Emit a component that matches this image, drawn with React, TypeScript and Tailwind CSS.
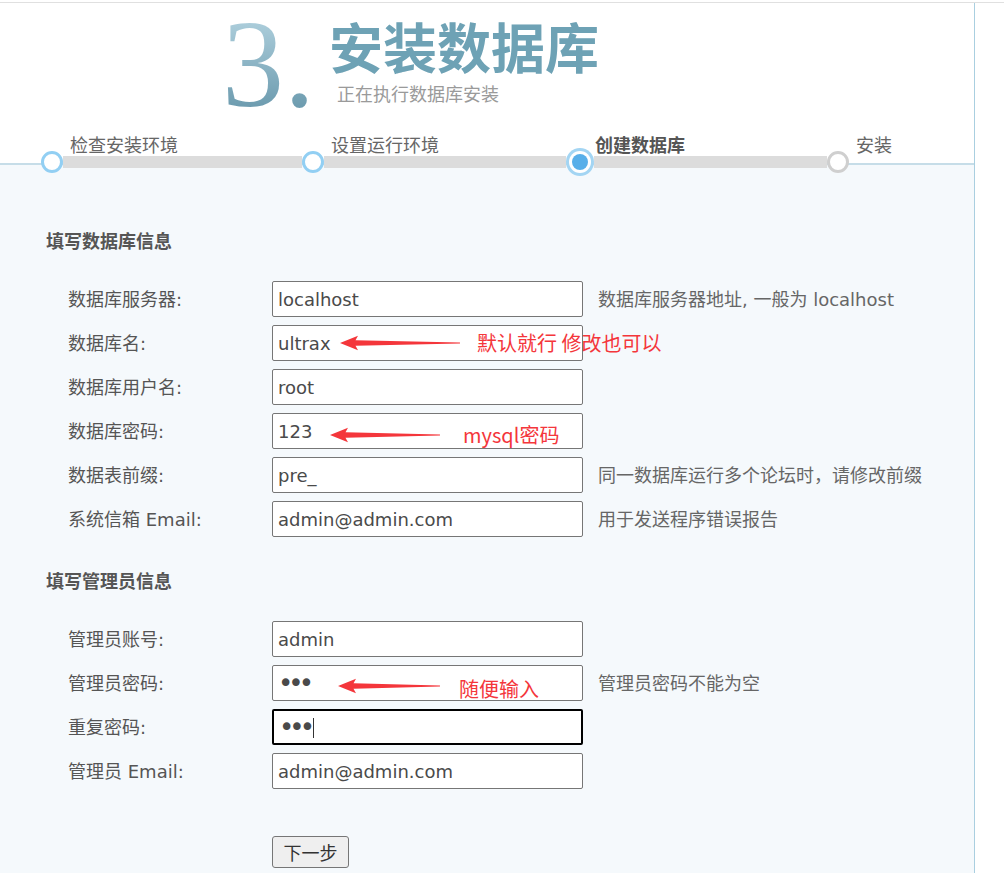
import React from "react";

type StepState = "done" | "active" | "pending";

interface Step {
  label: string;
  state: StepState;
  width: string;
}

const steps: Step[] = [
  { label: "检查安装环境", state: "done", width: "w-[261px]" },
  { label: "设置运行环境", state: "done", width: "w-[264px]" },
  { label: "创建数据库", state: "active", width: "w-[261px]" },
  { label: "安装", state: "pending", width: "w-[60px]" },
];

interface Note {
  arrowLeft: number;
  arrowWidth: number;
  arrowTop: number;
  textLeft: number;
  textTop: number;
  text: string;
}

interface Field {
  label: string;
  value: string;
  password?: boolean;
  focused?: boolean;
  help?: string;
  note?: Note;
}

const dbFields: Field[] = [
  { label: "数据库服务器:", value: "localhost", help: "数据库服务器地址, 一般为 localhost" },
  {
    label: "数据库名:",
    value: "ultrax",
    note: { arrowLeft: 294, arrowWidth: 120, arrowTop: 10, textLeft: 431, textTop: 6, text: "默认就行 修改也可以" },
  },
  { label: "数据库用户名:", value: "root" },
  {
    label: "数据库密码:",
    value: "123",
    note: { arrowLeft: 284, arrowWidth: 110, arrowTop: 14, textLeft: 417, textTop: 10, text: "mysql密码" },
  },
  { label: "数据表前缀:", value: "pre_", help: "同一数据库运行多个论坛时，请修改前缀" },
  { label: "系统信箱 Email:", value: "admin@admin.com", help: "用于发送程序错误报告" },
];

const adminFields: Field[] = [
  { label: "管理员账号:", value: "admin" },
  {
    label: "管理员密码:",
    value: "123",
    password: true,
    help: "管理员密码不能为空",
    note: { arrowLeft: 292, arrowWidth: 102, arrowTop: 13, textLeft: 413, textTop: 12, text: "随便输入" },
  },
  { label: "重复密码:", value: "123", password: true, focused: true },
  { label: "管理员 Email:", value: "admin@admin.com" },
];

const Arrow = ({ width }: { width: number }) => (
  <svg width={width} height={16} viewBox={`0 0 ${width} 16`}>
    <polygon
      points={`0,8 18,0.8 15.5,5.2 ${width},7.4 ${width},8.6 15.5,10.8 18,15.2`}
      fill="#f4363b"
    />
  </svg>
);

const StepCircle = ({ state }: { state: StepState }) => {
  if (state === "active") {
    return (
      <div className="w-[28px] h-[28px] shrink-0 rounded-full bg-[#a3d5f3] p-[3px]">
        <div className="w-full h-full rounded-full bg-white p-[3px]">
          <div className="w-full h-full rounded-full bg-[#58afe9]" />
        </div>
      </div>
    );
  }
  return (
    <div
      className={`w-[22px] h-[22px] shrink-0 rounded-full bg-white border-[3px] ${
        state === "done" ? "border-[#92cff3]" : "border-[#cfcfcf]"
      }`}
    />
  );
};

const FormRow = ({ field }: { field: Field }) => (
  <div className="relative flex items-center h-[36px] pl-[22px]">
    <div className="w-[204px] shrink-0 text-[18px] text-[#555] whitespace-nowrap">{field.label}</div>
    <div
      className={`relative w-[311px] h-[36px] shrink-0 bg-white rounded-[2px] flex items-center px-[5px] ${
        field.focused ? "border-2 border-black" : "border border-[#767676]"
      }`}
    >
      <input
        readOnly
        type={field.password ? "password" : "text"}
        defaultValue={field.value}
        className={`w-full bg-transparent outline-none text-[#4a4a4a] p-0 ${
          field.password ? "text-[26px] tracking-[-5px] leading-[30px]" : "text-[18px]"
        }`}
      />
      {field.focused && <span className="absolute left-[39px] top-[7px] w-px h-[20px] bg-[#333]" />}
    </div>
    {field.help && <div className="ml-[15px] text-[18px] text-[#666] whitespace-nowrap">{field.help}</div>}
    {field.note && (
      <>
        <div className="absolute" style={{ left: field.note.arrowLeft, top: field.note.arrowTop }}>
          <Arrow width={field.note.arrowWidth} />
        </div>
        <div
          className="absolute text-[20px] leading-[24px] text-[#f4363b] whitespace-nowrap font-['Noto_Sans_CJK_SC',sans-serif]"
          style={{ left: field.note.textLeft, top: field.note.textTop }}
        >
          {field.note.text}
        </div>
      </>
    )}
  </div>
);

export default function App() {
  return (
    <div className="min-h-screen bg-white pt-[2px] font-['DejaVu_Sans','Noto_Sans_CJK_SC',sans-serif]">
      <div className="border-t border-[#e0e0e0]">
        <div className="w-[975px] min-h-[870px] border-r border-[#aacfe0] bg-[#f5f9fc] flex flex-col">
          {/* header */}
          <div className="h-[162px] bg-white border-b-2 border-[#c6dde8]">
            <div className="h-[131px] flex pl-[222px]">
              <span className="pr-[2px] text-[124px] leading-none font-['Liberation_Serif',serif] bg-gradient-to-b from-[#b9d8e4] to-[#5a8da2] bg-clip-text text-transparent">
                3.
              </span>
              <div className="ml-[12px]">
                <h1 className="mt-[13px] text-[54px] leading-[60px] font-bold text-[#6ea2b5] font-['Noto_Sans_CJK_SC',sans-serif]">
                  安装数据库
                </h1>
                <p className="mt-[5px] ml-[8px] text-[18px] leading-[24px] text-[#9a9a9a] font-['Noto_Sans_CJK_SC',sans-serif]">
                  正在执行数据库安装
                </p>
              </div>
            </div>

            {/* steps */}
            <div className="relative z-10 flex pl-[41px]">
              {steps.map((step, i) => (
                <div key={step.label} className={`${step.width} shrink-0 flex flex-col`}>
                  <div
                    className={`h-[20px] leading-[20px] pl-[29px] text-[18px] whitespace-nowrap font-['Noto_Sans_CJK_SC',sans-serif] ${
                      step.state === "active" ? "font-bold text-[#555]" : "text-[#666]"
                    }`}
                  >
                    {step.label}
                  </div>
                  <div className="-mt-[6px] h-[28px] flex items-center">
                    <StepCircle state={step.state} />
                    {i < steps.length - 1 && <div className="flex-1 h-[12px] bg-[#dcdcdc]" />}
                  </div>
                </div>
              ))}
            </div>
          </div>

          {/* form */}
          <div className="px-[46px] pt-[63px] pb-[6px]">
            <h2 className="text-[18px] leading-[24px] font-bold text-[#555] font-['Noto_Sans_CJK_SC',sans-serif]">
              填写数据库信息
            </h2>
            <div className="mt-[29px] flex flex-col gap-[8px]">
              {dbFields.map((f) => (
                <FormRow key={f.label} field={f} />
              ))}
            </div>

            <h2 className="mt-[31px] text-[18px] leading-[24px] font-bold text-[#555] font-['Noto_Sans_CJK_SC',sans-serif]">
              填写管理员信息
            </h2>
            <div className="mt-[29px] flex flex-col gap-[8px]">
              {adminFields.map((f) => (
                <FormRow key={f.label} field={f} />
              ))}
            </div>

            <div className="mt-[47px] pl-[226px]">
              <button className="w-[77px] h-[32px] bg-[#efefef] border border-[#767676] rounded-[3px] text-[18px] text-[#333] font-['Noto_Sans_CJK_SC',sans-serif]">
                下一步
              </button>
            </div>
          </div>
        </div>
      </div>
    </div>
  );
}
